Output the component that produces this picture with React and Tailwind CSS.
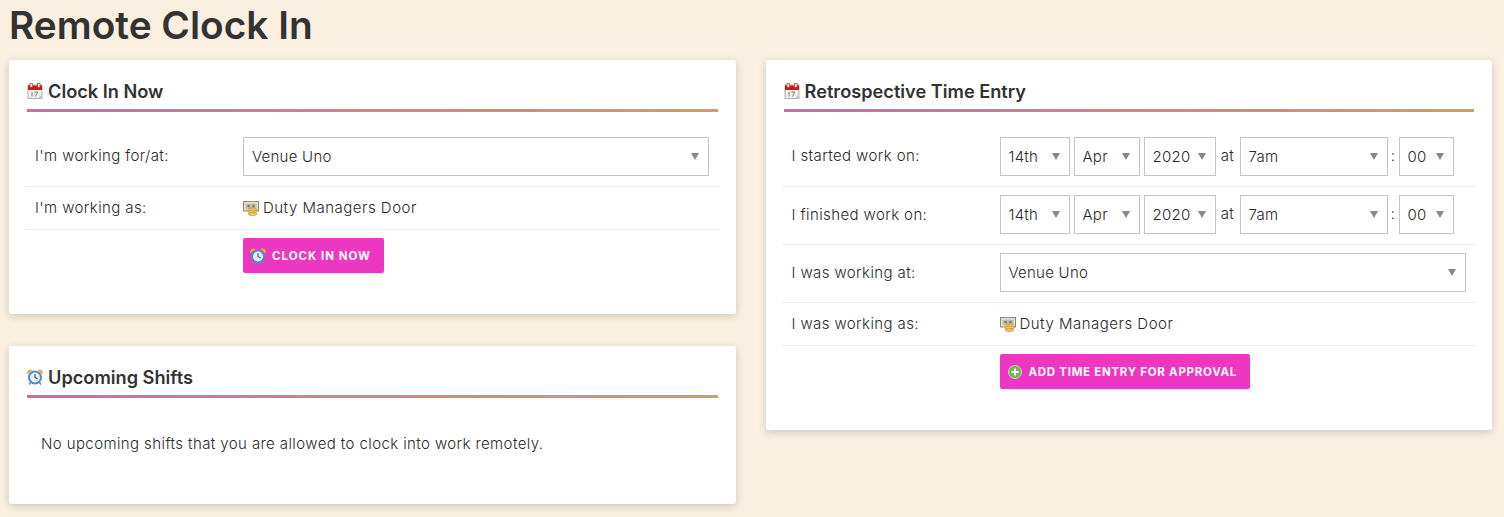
import React from "react";

const CalendarIcon = () => (
	<svg width="16" height="16" viewBox="0 0 16 16" className="shrink-0">
		<rect x="1" y="2" width="14" height="13.500" fill="#efefef" stroke="#b0b0b0" strokeWidth="1" />
		<rect x="1" y="2.500" width="14" height="4.500" fill="#dc1414" />
		<rect x="3" y="0.500" width="2.500" height="4" fill="#e8e8e8" stroke="#7a1a1a" strokeWidth="0.500" />
		<rect x="10.500" y="0.500" width="2.500" height="4" fill="#e8e8e8" stroke="#7a1a1a" strokeWidth="0.500" />
		<path d="M5 9v4.500M7.500 9h3l-2 4.500" fill="none" stroke="#808080" strokeWidth="1" />
		<path d="M11 15.500l4-4v4z" fill="#c4c4c4" />
	</svg>
);

const ClockIcon = () => (
	<svg width="16" height="16" viewBox="0 0 16 16" className="shrink-0">
		<path d="M0.500 5.500a3.500 3.500 0 0 1 5-4.500zM15.500 5.500a3.500 3.500 0 0 0-5-4.500z" fill="#f2a838" />
		<path d="M3.500 13.500l-1.500 2M12.500 13.500l1.500 2" stroke="#808080" strokeWidth="1.300" />
		<circle cx="8" cy="8.500" r="7" fill="#4b8ccc" />
		<circle cx="8" cy="8.500" r="5" fill="#e6f0fa" />
		<path d="M8 5v3.500l2.500 1.500" fill="none" stroke="#34526e" strokeWidth="1.100" />
	</svg>
);

const MoneyIcon = () => (
	<svg width="16" height="16" viewBox="0 0 16 16" className="shrink-0">
		<rect x="0.500" y="1.500" width="15" height="9.500" fill="#e6e0d0" stroke="#8f8978" />
		<rect x="2.500" y="3.500" width="11" height="5.500" fill="#c6bfaa" />
		<circle cx="5.500" cy="6" r="1.300" fill="#7d7768" />
		<circle cx="10.500" cy="6" r="1.300" fill="#7d7768" />
		<ellipse cx="9.500" cy="9.500" rx="4.500" ry="1.600" fill="#f0c860" stroke="#a97f22" strokeWidth="0.500" />
		<ellipse cx="9.500" cy="11.700" rx="4.500" ry="1.600" fill="#f0c860" stroke="#a97f22" strokeWidth="0.500" />
		<ellipse cx="9.500" cy="13.900" rx="4.500" ry="1.600" fill="#f0c860" stroke="#a97f22" strokeWidth="0.500" />
	</svg>
);

const PlusIcon = () => (
	<svg width="14" height="14" viewBox="0 0 14 14" className="shrink-0">
		<circle cx="7" cy="7" r="6.500" fill="#6fb55a" stroke="#d6ead0" strokeWidth="0.800" />
		<path d="M7 3.500v7M3.500 7h7" stroke="#ffffff" strokeWidth="2" />
	</svg>
);

const Select = ({ value, className }) => (
	<div className={`h-[39px] flex items-center justify-between border border-[#c4c4c4] bg-white pl-[8px] pr-[9px] shrink-0 tracking-[0.25px] ${className}`}>
		<span className="pt-[1px]">{value}</span>
		<span className="w-0 h-0 border-x-[4px] border-x-transparent border-t-[7px] border-t-[#888888]" />
	</div>
);

const DateTime = () => (
	<div className="flex items-center">
		<Select value="14th" className="w-[70px]" />
		<Select value="Apr" className="w-[66px] ml-[4px]" />
		<Select value="2020" className="w-[72px] ml-[4px]" />
		<span className="w-[24px] text-center">at</span>
		<Select value="7am" className="w-[148px]" />
		<span className="w-[11px] text-center">:</span>
		<Select value="00" className="w-[55px]" />
	</div>
);

const Row = ({ label, children, last, className = "", valueClass = "" }) => (
	<div className={`flex items-center pl-[10px] ${last ? "" : "border-b border-[#eeeeee]"} ${className}`}>
		<div className="w-[208px] shrink-0">{label}</div>
		<div className={`flex-1 ${valueClass}`}>{children}</div>
	</div>
);

const Card = ({ icon, title, children, className = "" }) => (
	<section className={`bg-white rounded-[3px] shadow-[0_2px_8px_rgba(0,0,0,0.18)] px-[18px] ${className}`}>
		<h2 className="flex items-center gap-[5px] h-[49px] pt-[13px] text-[18.2px] leading-none font-semibold text-[#333333] tracking-normal">
			{icon}
			{title}
		</h2>
		<div className="h-[3px] bg-gradient-to-r from-[#c86ca6] to-[#d09c68]" />
		{children}
	</section>
);

const Duty = () => (
	<div className="flex items-center gap-[4px] tracking-[0.5px]">
		<MoneyIcon />
		Duty Managers Door
	</div>
);

const Button = ({ icon, label, className }) => (
	<button className={`h-[35px] flex items-center rounded-[2px] bg-[#ee37c1] text-white text-[11.5px] font-bold uppercase ${className}`}>
		{icon}
		<span className="pt-[3px]">{label}</span>
	</button>
);

export default function App() {
	return (
		<div className="min-h-[517px] bg-[#faf0e1] pl-[9px] pr-[12px] overflow-hidden text-[15px] tracking-[0.4px] font-[350] text-[#2a2a2a] font-['Inter',sans-serif]">
			<h1 className="h-[60px] pt-[2px] text-[38.8px] leading-[46px] font-semibold text-[#333333] tracking-normal">Remote Clock In</h1>
			<div className="grid grid-cols-2 gap-x-[30px] items-start">
				<div className="flex flex-col gap-[32px]">
					<Card icon={<CalendarIcon />} title="Clock In Now" className="h-[254px]">
						<div className="-mx-[2px] mt-[15px]">
							<Row label="I'm working for/at:" className="h-[60px]">
								<Select value="Venue Uno" className="w-[466px]" />
							</Row>
							<Row label="I'm working as:" className="h-[43px]">
								<Duty />
							</Row>
							<Row last className="pt-[8px]">
								<Button icon={<ClockIcon />} label="Clock In Now" className="w-[141px] pl-[7px] gap-[6px] tracking-[1px]" />
							</Row>
						</div>
					</Card>
					<Card icon={<ClockIcon />} title="Upcoming Shifts" className="h-[158px]">
						<p className="pl-[14px] pt-[35px]">No upcoming shifts that you are allowed to clock into work remotely.</p>
					</Card>
				</div>
				<Card icon={<CalendarIcon />} title="Retrospective Time Entry" className="h-[370px]">
					<div className="-mx-[2px] mt-[15px]">
						<Row label="I started work on:" className="h-[60px]">
							<DateTime />
						</Row>
						<Row label="I finished work on:" className="h-[58px]" valueClass="mb-[2px]">
							<DateTime />
						</Row>
						<Row label="I was working at:" className="h-[58px]" valueClass="mb-[2px]">
							<Select value="Venue Uno" className="w-[466px]" />
						</Row>
						<Row label="I was working as:" className="h-[43px]">
							<Duty />
						</Row>
						<Row last className="pt-[8px]">
							<Button icon={<PlusIcon />} label="Add Time Entry For Approval" className="w-[250px] pl-[8px] gap-[7px] tracking-[0.72px]" />
						</Row>
					</div>
				</Card>
			</div>
		</div>
	);
}
